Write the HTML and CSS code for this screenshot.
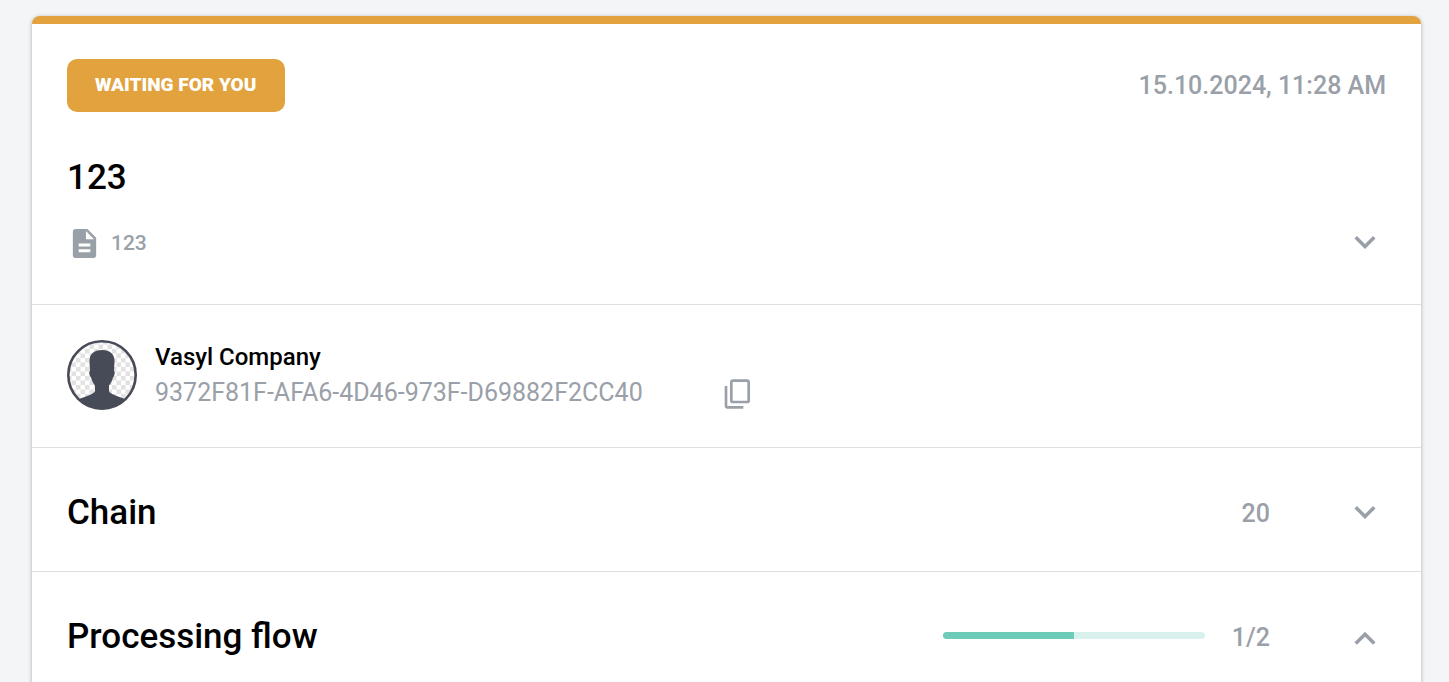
FILE: index.html
```html
<!DOCTYPE html>
<html lang="en">
<head>
<meta charset="utf-8">
<meta name="viewport" content="width=device-width, initial-scale=1">
<title>Document 123</title>
<link rel="stylesheet" href="styles.css">
</head>
<body>
<main class="card">
  <section class="summary">
    <div class="row">
      <span class="status">Waiting for you</span>
      <time class="date" datetime="2024-10-15T11:28">15.10.2024, 11:28 AM</time>
    </div>
    <h1 class="heading">123</h1>
    <div class="row">
      <div class="file">
        <svg class="file-icon" viewBox="0 0 24 24" aria-hidden="true"><path d="M14 2H6c-1.1 0-2 .9-2 2v16c0 1.1.9 2 2 2h12c1.1 0 2-.9 2-2V8zm2 16H8v-2h8zm0-4H8v-2h8zm-3-5V3.500L18.500 9z"/></svg>
        <span>123</span>
      </div>
      <button class="icon-button" type="button" aria-label="Show files">
        <svg class="chevron" viewBox="0 0 24 24" aria-hidden="true"><path d="M16.590 8.590 12 13.170 7.410 8.590 6 10l6 6 6-6z"/></svg>
      </button>
    </div>
  </section>

  <section class="company">
    <svg class="avatar" viewBox="0 0 70 70" role="img" aria-label="Vasyl Company">
      <defs>
        <pattern id="checks" width="9" height="9" patternUnits="userSpaceOnUse">
          <path fill="#fff" d="M0 0h9v9H0z"/>
          <path fill="#e2e2e2" d="M0 0h4.500v4.500H0zM4.500 4.500H9V9H4.500z"/>
        </pattern>
        <clipPath id="disc"><circle cx="35" cy="35" r="34"/></clipPath>
      </defs>
      <circle cx="35" cy="35" r="34" fill="url(#checks)"/>
      <path clip-path="url(#disc)" fill="#474b57" d="M35 10c8.500 0 12.800 4.500 12.500 12L47 31c1.200 0 .9 4.500-1 6.500-.8 3.500-2.500 6-4 8V51c1 3.500 9 5 17 8.500V70H11V59.500C19 56 27 54.500 28 51v-5.500c-1.500-2-3.200-4.500-4-8-1.900-2-2.200-6.500-1-6.500l-.5-9C22.200 14.500 26.500 10 35 10z"/>
      <circle cx="35" cy="35" r="33.700" fill="none" stroke="#474b57" stroke-width="2.600"/>
    </svg>
    <div class="company-text">
      <div class="company-name">Vasyl Company</div>
      <div class="company-id">
        <span>9372F81F-AFA6-4D46-973F-D69882F2CC40</span>
        <button class="icon-button" type="button" aria-label="Copy ID">
          <svg class="copy-icon" viewBox="0 0 24 24" aria-hidden="true"><path d="M16 21v2H4c-1.100 0-2-.9-2-2V6h2v15zM19 1H8c-1.100 0-2 .9-2 2v14c0 1.100.9 2 2 2h11c1.100 0 2-.9 2-2V3c0-1.100-.9-2-2-2zm0 16H8V3h11z"/></svg>
        </button>
      </div>
    </div>
  </section>

  <section class="panel">
    <h2 class="heading">Chain</h2>
    <div class="panel-side">
      <span class="count">20</span>
      <button class="icon-button" type="button" aria-label="Expand chain" aria-expanded="false">
        <svg class="chevron" viewBox="0 0 24 24" aria-hidden="true"><path d="M16.590 8 12 12.580 7.410 8 6 9.410l6 6 6-6z"/></svg>
      </button>
    </div>
  </section>

  <section class="panel">
    <h2 class="heading">Processing flow</h2>
    <div class="panel-side">
      <div class="steps">
        <progress class="progress" max="2" value="1" aria-label="Steps done"></progress>
        <span class="count">1/2</span>
      </div>
      <button class="icon-button" type="button" aria-label="Collapse processing flow" aria-expanded="true">
        <svg class="chevron" viewBox="0 0 24 24" aria-hidden="true"><path d="m12 9-6 6 1.410 1.410L12 11.830l4.590 4.580L18 15z"/></svg>
      </button>
    </div>
  </section>
</main>
</body>
</html>
```
FILE: styles.css
```css
* {
  box-sizing: border-box;
}

html {
  scrollbar-width: none;
}

body {
  margin: 0;
  padding: 16px 28px 0 32px;
  min-height: 100vh;
  display: flex;
  flex-direction: column;
  background: #f4f5f7;
  color: #000;
  font-family: Roboto, "Liberation Sans", sans-serif;
  font-size: 25px;
  line-height: 35px;
}

.card {
  flex: 1;
  background: #fff;
  border-top: 8px solid #e2a33e;
  border-radius: 8px 8px 0 0;
  box-shadow: 0 1px 4px rgba(0, 0, 0, 0.3);
}

.row,
.panel {
  display: flex;
  align-items: center;
  justify-content: space-between;
}

.summary {
  padding: 35px 35px 41px;
}

.status {
  padding: 8px 29px 10px 28px;
  border-radius: 10px;
  background: #e2a33e;
  color: #fff;
  font-size: 19px;
  font-weight: 900;
  text-transform: uppercase;
}

.date,
.count {
  color: #9aa0a8;
  font-weight: 500;
}

.heading {
  margin: 0;
  font-size: 35px;
  font-weight: 500;
  line-height: 42px;
}

.summary .heading {
  margin: 45px 0 22px;
}

.file {
  display: flex;
  align-items: center;
  gap: 9px;
  padding-top: 2px;
  color: #9aa0a8;
  font-size: 21px;
  font-weight: 500;
}

.icon-button {
  display: flex;
  padding: 0;
  border: 0;
  background: none;
  color: #9aa0a8;
  cursor: pointer;
}

.chevron,
.file-icon,
.copy-icon {
  fill: currentColor;
}

.chevron {
  width: 42px;
  height: 42px;
}

.file-icon {
  width: 35px;
  height: 35px;
}

.copy-icon {
  width: 32px;
  height: 32px;
}

.company,
.panel {
  border-top: 1px solid #dedfe0;
}

.company {
  display: flex;
  gap: 18px;
  padding: 35px 35px 37px;
}

.avatar {
  width: 70px;
  height: 70px;
}

.company-name {
  font-size: 24px;
  font-weight: 500;
}

.company-id {
  display: flex;
  align-items: center;
  gap: 79px;
  color: #9aa0a8;
}

.company-id .icon-button {
  padding-top: 2px;
}

.panel {
  padding: 44px 35px 37px;
}

.panel-side {
  display: flex;
  align-items: center;
  gap: 74px;
}

.steps {
  display: flex;
  align-items: center;
  gap: 27px;
}

.progress {
  appearance: none;
  width: 262px;
  height: 7px;
  margin-bottom: 4px;
  border: 0;
  border-radius: 4px;
  overflow: hidden;
  background: #d9f1ec;
}

.progress::-webkit-progress-bar {
  background: #d9f1ec;
}

.progress::-webkit-progress-value {
  background: #6dccb8;
}
```
